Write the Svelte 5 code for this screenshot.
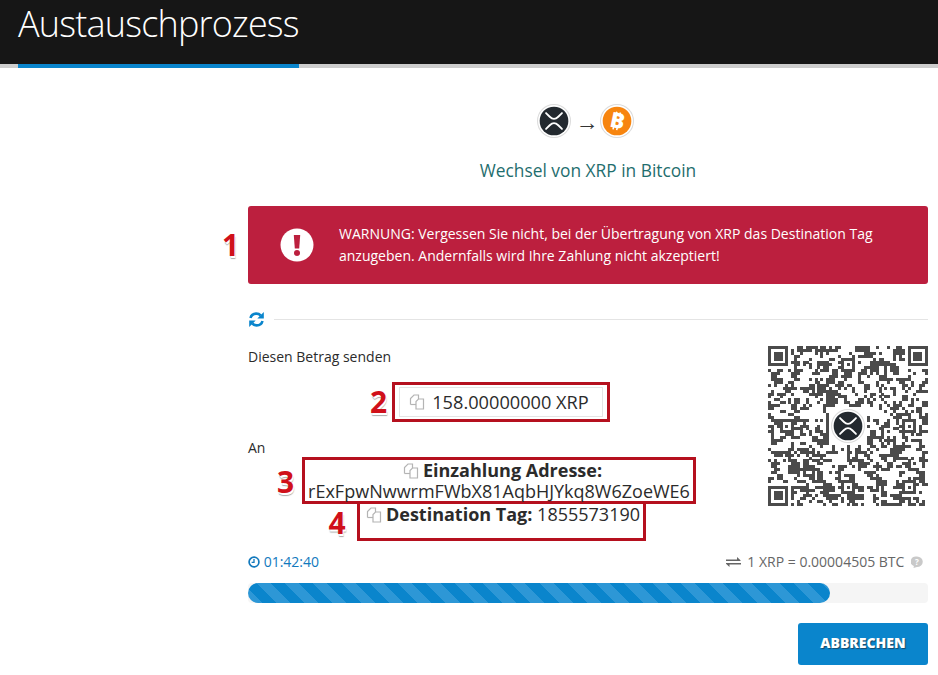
<script>
  const N = 55;
  const M = 160 / N;
  function makeQr() {
    let seed = 20231;
    const rnd = () => {
      seed = (seed * 1664525 + 1013904223) % 4294967296;
      return seed / 4294967296;
    };
    const grid = [];
    for (let y = 0; y < N; y++) {
      const row = [];
      for (let x = 0; x < N; x++) {
        const left = x > 0 ? row[x - 1] : 0;
        const up = y > 0 ? grid[y - 1][x] : 0;
        row.push(rnd() < 0.28 + 0.16 * left + 0.16 * up ? 1 : 0);
      }
      grid.push(row);
    }
    const clear = (x0, y0, w, h) => {
      for (let y = y0; y < y0 + h; y++) for (let x = x0; x < x0 + w; x++) if (grid[y] && x >= 0 && x < N) grid[y][x] = 0;
    };
    const finder = (x0, y0) => {
      clear(x0 - 1, y0 - 1, 9, 9);
      for (let y = 0; y < 7; y++)
        for (let x = 0; x < 7; x++) {
          const ring = x === 0 || y === 0 || x === 6 || y === 6;
          const core = x >= 2 && x <= 4 && y >= 2 && y <= 4;
          if (ring || core) grid[y0 + y][x0 + x] = 1;
        }
    };
    const align = (x0, y0) => {
      for (let y = 0; y < 5; y++)
        for (let x = 0; x < 5; x++) {
          const ring = x === 0 || y === 0 || x === 4 || y === 4;
          grid[y0 + y][x0 + x] = ring || (x === 2 && y === 2) ? 1 : 0;
        }
    };
    finder(0, 0);
    finder(N - 7, 0);
    finder(0, N - 7);
    [[4, 25], [25, 4], [46, 25], [25, 46], [46, 46]].forEach(([x, y]) => align(x, y));
    clear(21, 21, 13, 13);
    const rects = [];
    grid.forEach((row, y) =>
      row.forEach((v, x) => {
        if (v) rects.push({ x: x * M, y: y * M });
      })
    );
    return rects;
  }
  const modules = makeQr();
</script>

{#snippet copyIcon()}
  <svg class="copy" viewBox="0 0 16 16" aria-hidden="true">
    <path d="M1.500 10.500V4.500L5 1H9.500V5" fill="none" stroke="#b4b4b4" stroke-width="1.200" />
    <path d="M1.500 10.500H7" fill="none" stroke="#b4b4b4" stroke-width="1.200" />
    <path d="M7 15V7.500L9.500 5H14.500V15Z" fill="#fff" stroke="#b4b4b4" stroke-width="1.200" />
  </svg>
{/snippet}

{#snippet xrpLogo(size)}
  <svg width={size} height={size} viewBox="0 0 32 32" aria-hidden="true">
    <circle cx="16" cy="16" r="15.500" fill="#fff" stroke="#dcdcdc" />
    <circle cx="16" cy="16" r="13.500" fill="#23292f" />
    <path d="M8.500 8.500L12 12Q16 16 20 12L23.500 8.500M8.500 23.500L12 20Q16 16 20 20L23.500 23.500" fill="none" stroke="#fff" stroke-width="1.700" stroke-linecap="round" />
  </svg>
{/snippet}

<header class="topbar">
  <h1>Austauschprozess</h1>
</header>
<div class="strip"><span class="tab"></span></div>

<main class="content">
  <div class="pair">
    {@render xrpLogo(34)}
    <span class="arrow">→</span>
    <svg width="34" height="34" viewBox="0 0 32 32" aria-hidden="true">
      <circle cx="16" cy="16" r="15.500" fill="#fff" stroke="#dcdcdc" />
      <circle cx="16" cy="16" r="13.500" fill="#f7850f" />
      <g transform="rotate(12 16 16)">
        <text x="16.500" y="22.700" text-anchor="middle" class="btc">B</text>
        <path d="M14 7.500v2.500M17.500 7.500v2.500M14 22v2.500M17.500 22v2.500" stroke="#fff" stroke-width="1.500" />
      </g>
    </svg>
  </div>
  <h2>Wechsel von XRP in Bitcoin</h2>

  <section class="alert">
    <span class="mark one">1</span>
    <svg class="alert-icon" width="34" height="34" viewBox="0 0 34 34" aria-hidden="true">
      <circle cx="17" cy="17" r="16.500" fill="#fff" />
      <path d="M13.800 7h6.400l-1 13.500h-4.400Z" fill="#bc1f3e" />
      <circle cx="17" cy="25" r="3" fill="#bc1f3e" />
    </svg>
    <p>WARNUNG: Vergessen Sie nicht, bei der Übertragung von XRP das Destination Tag anzugeben. Andernfalls wird Ihre Zahlung nicht akzeptiert!</p>
  </section>

  <div class="divider">
    <svg width="17" height="17" viewBox="0 0 17 17" aria-hidden="true">
      <path d="M2.500 7C3.200 4.200 5.500 2.600 8.300 2.600c1.800 0 3.300.7 4.400 1.900" fill="none" stroke="#0a85cc" stroke-width="2.600" />
      <path d="M15.800 1v6.500h-6.500Z" fill="#0a85cc" />
      <path d="M14.500 10c-.7 2.800-3 4.400-5.800 4.400-1.800 0-3.300-.7-4.400-1.900" fill="none" stroke="#0a85cc" stroke-width="2.600" />
      <path d="M1.200 16V9.500h6.500Z" fill="#0a85cc" />
    </svg>
    <span class="line"></span>
  </div>

  <div class="payment">
    <div class="details">
      <p class="label">Diesen Betrag senden</p>
      <div class="amount-box">
        <span class="mark two">2</span>
        <div class="amount">{@render copyIcon()}<span>158.00000000&nbsp;XRP</span></div>
      </div>
      <p class="label to">An</p>
      <div class="address-box">
        <span class="mark three">3</span>
        <div class="address-title">{@render copyIcon()}<strong>Einzahlung Adresse:</strong></div>
        <div class="address">rExFpwNwwrmFWbX81AqbHJYkq8W6ZoeWE6</div>
      </div>
      <div class="tag-box">
        <span class="mark four">4</span>
        {@render copyIcon()}<strong>Destination Tag:</strong> 1855573190
      </div>
    </div>
    <div class="qr">
      <svg width="160" height="160" viewBox="0 0 160 160" aria-hidden="true" shape-rendering="crispEdges">
        {#each modules as m}
          <rect x={m.x} y={m.y} width={M + 0.1} height={M + 0.1} fill="#4b4b4b" />
        {/each}
      </svg>
      <span class="qr-logo">{@render xrpLogo(34)}</span>
    </div>
  </div>

  <div class="meta">
    <span class="time">
      <svg width="12" height="12" viewBox="0 0 12 12" aria-hidden="true">
        <circle cx="6" cy="6" r="4.900" fill="none" stroke="#1279bd" stroke-width="1.700" />
        <path d="M6 3v3.400H3.600" fill="none" stroke="#1279bd" stroke-width="1.300" />
      </svg>
      01:42:40
    </span>
    <span class="rate">
      <svg width="15" height="12" viewBox="0 0 15 12" aria-hidden="true">
        <path d="M0 3.500h11V1l3.500 3.200V5H0ZM15 7H0v.8L3.500 11V8.500H15Z" fill="#666" />
      </svg>
      1 XRP = 0.00004505 BTC
      <svg class="help" width="12" height="12" viewBox="0 0 12 12" aria-hidden="true">
        <path d="M6 .5a5.500 5 0 0 1 0 10.500L2.500 12l.4-2A5.500 5 0 0 1 6 .500Z" fill="#c9c9c9" />
        <text x="6" y="8.800" text-anchor="middle" class="q">?</text>
      </svg>
    </span>
  </div>

  <div class="progress"><div class="bar"></div></div>

  <div class="actions"><button type="button">ABBRECHEN</button></div>
</main>

<style>
  :global(body) {
    margin: 0;
    background: #fff;
    font-family: "Open Sans", "Liberation Sans", sans-serif;
    color: #2b2b2b;
  }
  .topbar {
    height: 64px;
    background: #161616;
    padding-left: 18px;
    overflow: hidden;
  }
  h1 {
    margin: 0;
    color: #fff;
    font-weight: 300;
    font-size: 36px;
    line-height: 48px;
    letter-spacing: -0.800px;
  }
  .strip {
    height: 4px;
    background: #cdcdcd;
    padding-left: 18px;
  }
  .tab {
    display: block;
    width: 281px;
    height: 4px;
    background: #0a85cc;
  }
  .content {
    padding: 36px 10px 0 248px;
  }
  .pair {
    display: flex;
    justify-content: center;
    align-items: center;
    gap: 3px;
    padding-right: 6px;
    height: 34px;
  }
  .arrow {
    font-size: 23px;
    line-height: 20px;
    color: #333;
    margin: 0 -2px 0 2px;
  }
  .btc {
    fill: #fff;
    font-family: "Open Sans", sans-serif;
    font-weight: 800;
    font-size: 20px;
  }
  h2 {
    margin: 19px 0 0;
    height: 49px;
    text-align: center;
    font-weight: 400;
    font-size: 17.350px;
    line-height: 26px;
    color: #1f6e6e;
  }
  .alert {
    position: relative;
    display: flex;
    align-items: center;
    height: 78px;
    padding: 0 32px 0 32px;
    background: #bc1f3e;
    border-radius: 3px;
    box-sizing: border-box;
    gap: 25px;
  }
  .alert p {
    margin: 0;
    color: #fff;
    font-size: 14px;
    font-weight: 500;
    line-height: 22px;
  }
  .alert-icon {
    flex: none;
  }
  .divider {
    display: flex;
    align-items: center;
    gap: 9px;
    margin-top: 27px;
    height: 17px;
  }
  .divider svg {
    flex: none;
  }
  .line {
    flex: 1;
    height: 1px;
    background: #e4e4e4;
  }
  .payment {
    display: flex;
    gap: 16px;
    margin-top: 17px;
  }
  .details {
    flex: 1;
    display: flex;
    flex-direction: column;
    align-items: center;
    min-width: 0;
  }
  .label {
    align-self: flex-start;
    margin: 0;
    font-size: 14px;
    line-height: 24px;
    height: 24px;
  }
  .amount-box {
    position: relative;
    margin: 13px 0 0 2px;
    border: 3px solid #b5101e;
    padding: 2px 4px;
    box-sizing: border-box;
    width: 218px;
    height: 40px;
  }
  .amount {
    height: 30px;
    box-sizing: border-box;
    border: 1px solid #e4e4e4;
    padding-right: 4px;
    display: flex;
    align-items: center;
    justify-content: center;
    gap: 3px;
    font-size: 18.200px;
  }
  .copy {
    width: 16px;
    height: 16px;
    flex: none;
    vertical-align: -2px;
    margin-right: 4px;
  }
  .to {
    margin-top: 14px;
  }
  .address-box {
    position: relative;
    border: 3px solid #b5101e;
    box-sizing: border-box;
    width: 394px;
    height: 47px;
    margin: -3px 0 0 -2px;
    text-align: center;
    font-size: 18px;
  }
  .address-title {
    line-height: 19px;
    font-size: 18px;
    padding: 1px 0 0 7px;
  }
  .address {
    line-height: 23px;
    font-size: 18px;
    white-space: nowrap;
  }
  .tag-box {
    position: relative;
    border: 3px solid #b5101e;
    border-top-width: 0;
    box-sizing: border-box;
    width: 289px;
    height: 37px;
    margin-left: 2px;
    padding-left: 4px;
    text-align: center;
    font-size: 18px;
    line-height: 21px;
    white-space: nowrap;
  }
  .mark {
    position: absolute;
    color: #d0101a;
    font-weight: 700;
    font-size: 30px;
    line-height: 32px;
    text-shadow: 1px 2px 0 #fff, 1px 3px 1px #aaa;
  }
  .one { left: -26px; top: 23px; }
  .two { left: -25px; top: 1px; }
  .three { left: -28px; top: 6px; }
  .four { left: -31px; top: 3px; }
  .qr {
    position: relative;
    flex: none;
    width: 160px;
    height: 160px;
    margin-top: 1px;
  }
  .qr svg {
    display: block;
  }
  .qr-logo {
    position: absolute;
    left: 63px;
    top: 63px;
  }
  .meta {
    display: flex;
    justify-content: space-between;
    align-items: center;
    margin-top: 9px;
    height: 22px;
    font-size: 14px;
  }
  .time {
    color: #1279bd;
  }
  .time svg {
    vertical-align: -1px;
  }
  .rate {
    color: #666;
  }
  .rate svg {
    vertical-align: -1px;
    margin-right: 3px;
  }
  .rate .help {
    margin: 0 5px 0 3px;
  }
  .q {
    fill: #fff;
    font-family: "Open Sans", sans-serif;
    font-weight: 700;
    font-size: 8px;
  }
  .progress {
    margin-top: 11px;
    height: 20px;
    background: #f5f5f5;
    border-radius: 4px;
  }
  .bar {
    width: 582px;
    height: 20px;
    border-radius: 10px;
    background: repeating-linear-gradient(45deg, #2d97d6 0 10px, #0a85cc 10px 20px);
  }
  .actions {
    display: flex;
    justify-content: flex-end;
    margin-top: 20px;
  }
  button {
    width: 130px;
    height: 42px;
    border: 0;
    border-radius: 3px;
    padding: 0 0 3px;
    background: #0a85cc;
    color: #fff;
    font-family: "Open Sans", sans-serif;
    font-weight: 800;
    font-size: 14px;
    text-shadow: 1px 1px 1px #1a4a6a;
  }
</style>
